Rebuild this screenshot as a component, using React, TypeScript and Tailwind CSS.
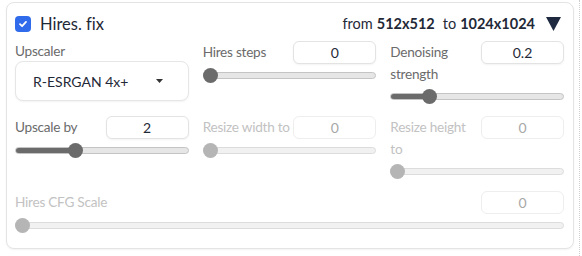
import React from "react";

const font = { fontFamily: "Lato, 'Liberation Sans', sans-serif" };

function Slider({ pct, disabled }: { pct: number; disabled?: boolean }) {
  return (
    <div className="relative mt-[4px] flex h-[15px] items-center">
      <div
        className={`h-[7px] w-full overflow-hidden rounded-full border ${
          disabled ? "border-[#dcdcdc] bg-[#f1f1f1]" : "border-[#c4c4c4] bg-[#e6e6e6]"
        }`}
      >
        <div
          className={disabled ? "h-full bg-[#b8b8b8]" : "h-full bg-[#6b6b6b]"}
          style={{ width: `calc(${pct}% * 0.9 + 7px)` }}
        ></div>
      </div>
      <div
        className={`absolute top-0 h-[15px] w-[15px] rounded-full ${
          disabled ? "bg-[#b5b5b5]" : "bg-[#6b6b6b]"
        }`}
        style={{ left: `calc((100% - 15px) * ${pct / 100})` }}
      ></div>
    </div>
  );
}

function NumberField({
  label,
  value,
  pct,
  disabled,
}: {
  label: string;
  value: string;
  pct: number;
  disabled?: boolean;
}) {
  return (
    <div className="flex flex-col">
      <div className="flex items-start justify-between gap-[2px]">
        <span
          className={`text-[13.6px] leading-[22px] tracking-[-0.25px] ${
            disabled ? "text-[#c2c2c2]" : "text-[#6b6b6b]"
          }`}
        >
          {label}
        </span>
        <div
          className={`flex h-[23px] w-[83px] shrink-0 items-center justify-center rounded-[6px] border bg-white text-[14px] ${
            disabled
              ? "border-[#eeeeee] text-[#a8a8a8]"
              : "border-[#e3e3e3] text-[#1f2937] shadow-[0_1px_2px_rgba(0,0,0,0.05)]"
          }`}
        >
          {value}
        </div>
      </div>
      <Slider pct={pct} disabled={disabled} />
    </div>
  );
}

export default function App() {
  return (
    <div className="flex h-[256px] w-[582px] bg-white [font-variant-ligatures:none]" style={font}>
      <div className="ml-[6px] mt-[2px] h-[247px] w-[568px] rounded-[8px] border border-[#e4e4e4] bg-white pl-[8px] pr-[9px] pt-[10px] shadow-[0_1px_2px_rgba(0,0,0,0.05)]">
        <div className="flex h-[22px] items-center justify-between">
          <label className="flex items-center gap-[9px]">
            <span className="flex h-[16px] w-[16px] items-center justify-center rounded-[4px] bg-[#2f6bea]">
              <svg width="10" height="10" viewBox="0 0 10 10">
                <path d="M2 5.2 L4.1 7.2 L8 2.9" fill="none" stroke="white" strokeWidth="1.8" strokeLinecap="round" strokeLinejoin="round" />
              </svg>
            </span>
            <span className="text-[16.5px] text-[#1f2937]">Hires. fix</span>
          </label>
          <div className="flex items-center text-[14.5px] text-[#1f2937]">
            <span>from</span>
            <b className="ml-[4px] font-bold">512x512</b>
            <span className="ml-[8px]">to</span>
            <b className="ml-[4px] font-bold">1024x1024</b>
            <svg className="ml-[11px] mr-[3px]" width="15" height="14" viewBox="0 0 15 14">
              <path d="M0 0 L15 0 L7.5 14 Z" fill="#1f2a40" />
            </svg>
          </div>
        </div>

        <div className="mt-[6px] grid grid-cols-3 gap-x-[14px] gap-y-[12px]">
          <div className="flex flex-col">
            <span className="text-[13.6px] leading-[20px] tracking-[-0.25px] text-[#6b6b6b]">Upscaler</span>
            <div className="flex h-[40px] items-center justify-between rounded-[8px] border border-[#e6e6e6] bg-white pl-[17px] pr-[25px] text-[14px] text-[#1f2937] shadow-[0_1px_2px_rgba(0,0,0,0.05)]">
              <span>R-ESRGAN 4x+</span>
              <svg width="7" height="4" viewBox="0 0 7 4">
                <path d="M0 0 L7 0 L3.5 4 Z" fill="#333" />
              </svg>
            </div>
          </div>
          <NumberField label="Hires steps" value="0" pct={0} />
          <NumberField label="Denoising strength" value="0.2" pct={20} />

          <NumberField label="Upscale by" value="2" pct={33.3} />
          <NumberField label="Resize width to" value="0" pct={0} disabled />
          <NumberField label="Resize height to" value="0" pct={0} disabled />

          <div className="col-span-3">
            <NumberField label="Hires CFG Scale" value="0" pct={0} disabled />
          </div>
        </div>
      </div>
      <div className="ml-[5px] h-full border-l border-dotted border-[#cfcfcf]"></div>
    </div>
  );
}
